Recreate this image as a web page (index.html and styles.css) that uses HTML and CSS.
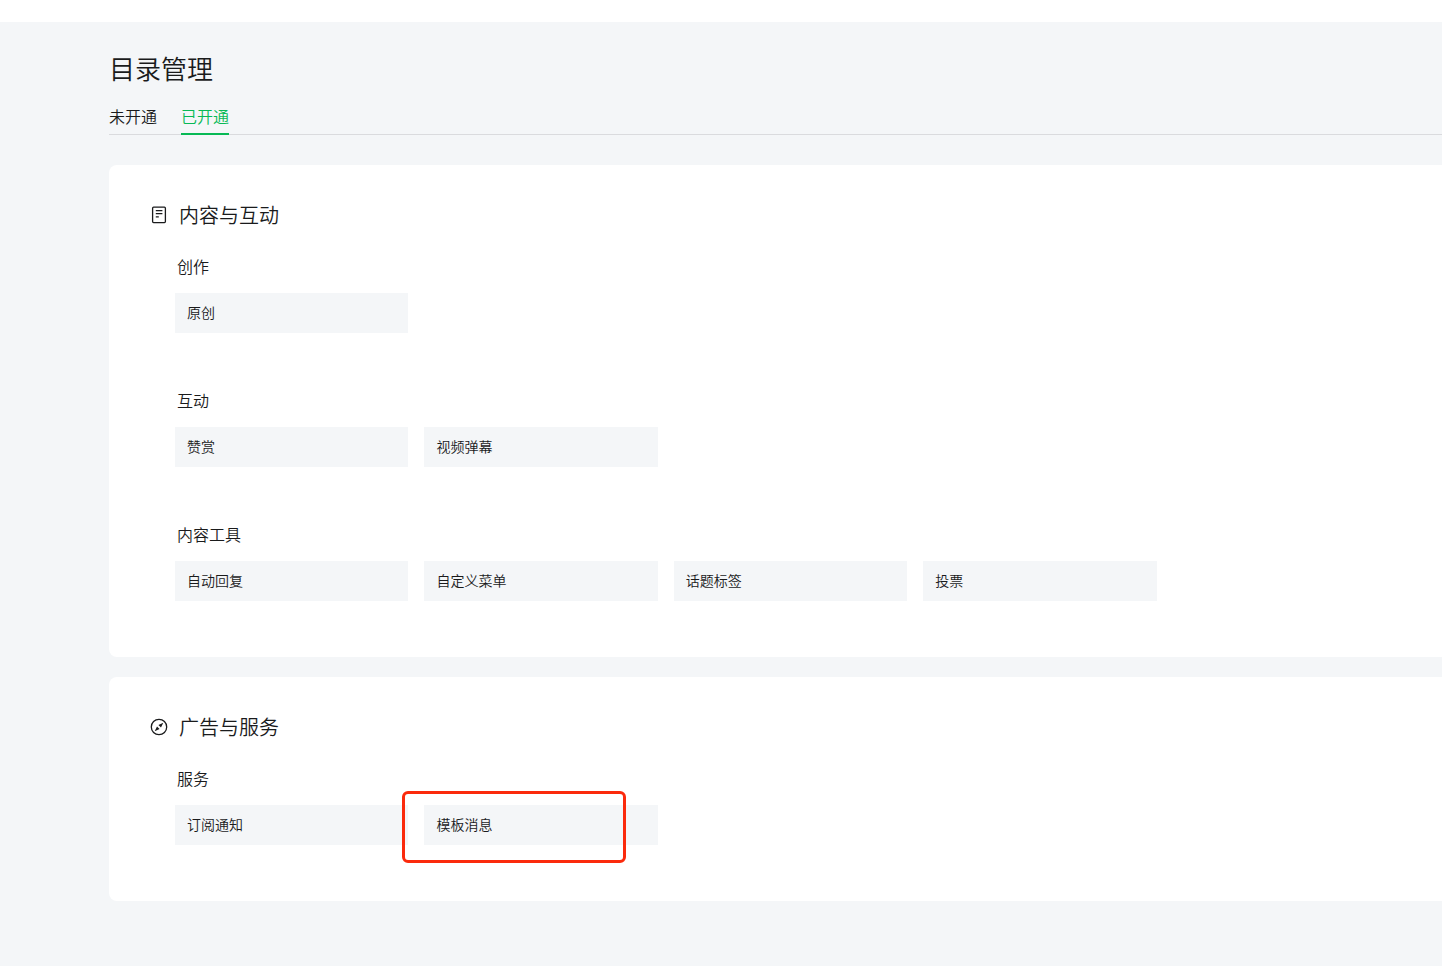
FILE: index.html
```html
<!DOCTYPE html>
<html lang="zh-CN">
<head>
<meta charset="utf-8">
<title>目录管理</title>
<link rel="stylesheet" href="styles.css">
</head>
<body>
<header class="topbar"></header>
<main class="page">
  <h1 class="page-title">目录管理</h1>
  <nav class="tabs">
    <a class="tab" href="#closed">未开通</a>
    <a class="tab tab-active" href="#opened" aria-current="page">已开通</a>
  </nav>

  <section class="card">
    <h2 class="card-title">
      <svg class="icon" viewBox="0 0 18 18" aria-hidden="true">
        <rect x="2.6" y="1.2" width="12.8" height="15.4" rx="1"/>
        <path d="M5.8 4.6h6.6M5.8 7.7h6.6M5.8 10.9h3"/>
      </svg>
      内容与互动
    </h2>
    <div class="group">
      <h3 class="group-title">创作</h3>
      <div class="tiles">
        <a class="tile" href="#original">原创</a>
      </div>
    </div>
    <div class="group">
      <h3 class="group-title">互动</h3>
      <div class="tiles">
        <a class="tile" href="#reward">赞赏</a>
        <a class="tile" href="#danmu">视频弹幕</a>
      </div>
    </div>
    <div class="group">
      <h3 class="group-title">内容工具</h3>
      <div class="tiles">
        <a class="tile" href="#reply">自动回复</a>
        <a class="tile" href="#menu">自定义菜单</a>
        <a class="tile" href="#topic">话题标签</a>
        <a class="tile" href="#vote">投票</a>
      </div>
    </div>
  </section>

  <section class="card">
    <h2 class="card-title">
      <svg class="icon" viewBox="0 0 18 18" aria-hidden="true">
        <circle cx="9" cy="9" r="7.7"/>
        <path class="needle" d="M13.3 4.7 11 9.6 8.4 7ZM4.7 13.3 7 8.4 9.6 11Z"/>
      </svg>
      广告与服务
    </h2>
    <div class="group">
      <h3 class="group-title">服务</h3>
      <div class="tiles">
        <a class="tile" href="#subscribe">订阅通知</a>
        <a class="tile tile-marked" href="#template">模板消息</a>
      </div>
    </div>
  </section>
</main>
</body>
</html>
```

FILE: styles.css
```css
*,
*::after {
  box-sizing: border-box;
}

body {
  margin: 0;
  background: #f4f6f8;
  color: #1a1b1c;
  font-family: "Noto Sans CJK SC", sans-serif;
  font-weight: 350;
}

h1,
h2,
h3 {
  margin: 0;
  font-weight: inherit;
}

a {
  color: inherit;
  text-decoration: none;
}

.topbar {
  height: 22px;
  background: #fff;
}

.page {
  padding: 28px 0 65px 109px;
}

.page-title {
  font-size: 26px;
  line-height: 36px;
}

.tabs {
  display: flex;
  gap: 24px;
  margin-top: 16px;
  border-bottom: 1px solid #dadbde;
}

.tab {
  margin-bottom: -1px;
  padding-bottom: 3px;
  border-bottom: 2px solid transparent;
  font-size: 16px;
  line-height: 28px;
}

.tab-active {
  border-color: #07b955;
  color: #07b955;
}

.card {
  margin-top: 20px;
  padding: 34px 36px 0 41px;
  border-radius: 8px 0 0 8px;
  background: #fff;
}

.tabs + .card {
  margin-top: 30px;
}

.card-title {
  display: flex;
  align-items: center;
  gap: 11px;
  margin-bottom: 24px;
  font-size: 20px;
  line-height: 32px;
}

.icon {
  width: 18px;
  height: 18px;
  fill: none;
  stroke: #1a1b1c;
  stroke-width: 1.3;
}

.needle {
  fill: #1a1b1c;
  stroke: none;
}

.group {
  padding: 0 0 56px 25px;
}

.group-title {
  margin: 0 0 16px 2px;
  font-size: 16px;
  line-height: 22px;
}

.tiles {
  display: grid;
  grid-template-columns: repeat(5, 1fr);
  gap: 16px;
}

.tile {
  padding: 0 12px 2px;
  background: #f4f6f8;
  font-size: 14px;
  line-height: 38px;
}

.tile-marked {
  position: relative;
}

.tile-marked::after {
  content: "";
  position: absolute;
  top: -14px;
  left: -22px;
  width: 224px;
  height: 72px;
  border: 3px solid #fb2a0c;
  border-radius: 6px;
}
```
